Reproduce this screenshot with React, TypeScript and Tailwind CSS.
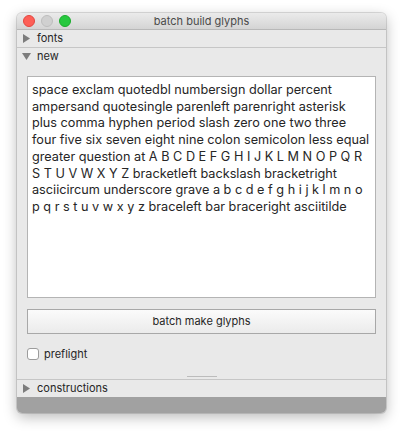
const lines = [
  "space exclam quotedbl numbersign dollar percent",
  "ampersand quotesingle parenleft parenright asterisk",
  "plus comma hyphen period slash zero one two three",
  "four five six seven eight nine colon semicolon less equal",
  "greater question at A B C D E F G H I J K L M N O P Q R",
  "S T U V W X Y Z bracketleft backslash bracketright",
  "asciicircum underscore grave a b c d e f g h i j k l m n o",
  "p q r s t u v w x y z braceleft bar braceright asciitilde",
]

function Disclosure({ open }: { open?: boolean }) {
  return open ? (
    <svg width="9" height="7" viewBox="0 0 9 7" className="shrink-0">
      <path d="M0 0 L9 0 L4.5 7 Z" fill="#7d7d7d" />
    </svg>
  ) : (
    <svg width="7" height="9" viewBox="0 0 7 9" className="shrink-0">
      <path d="M0 0 L7 4.5 L0 9 Z" fill="#7d7d7d" />
    </svg>
  )
}

function SectionHeader({ label, open }: { label: string; open?: boolean }) {
  return (
    <div className="h-[17px] flex items-center pl-[5px] gap-[6px] text-[11px] text-[#262626]">
      <div className="w-[9px] flex justify-center">
        <Disclosure open={open} />
      </div>
      <span className="leading-none">{label}</span>
    </div>
  )
}

export default function App() {
  return (
    <div
      className="w-[403px] h-[434px] bg-white pt-[13px] pl-[17px]"
      style={{ fontFamily: "Inter, 'Noto Sans', sans-serif" }}
    >
      <div className="w-[369px] h-[400px] rounded-[5px] overflow-hidden flex flex-col bg-[#e9e9e9] shadow-[0_4px_14px_rgba(0,0,0,0.28),0_0_0_1px_rgba(0,0,0,0.12)]">
        {/* Title bar */}
        <div className="relative h-[16px] shrink-0 flex items-center bg-gradient-to-b from-[#ebebeb] to-[#d4d4d4] border-b border-[#b8b8b8] box-content">
          <div className="flex items-center gap-[6px] pl-[6px]">
            <span className="w-[12px] h-[12px] rounded-full bg-[#fd5f57] border border-[#e2463f]" />
            <span className="w-[12px] h-[12px] rounded-full bg-[#d0d0d0] border border-[#bdbdbd]" />
            <span className="w-[12px] h-[12px] rounded-full bg-[#27c83f] border border-[#1aac2c]" />
          </div>
          <div className="absolute inset-0 flex items-center justify-center text-[11px] text-[#4a4a4a] leading-none">
            batch build glyphs
          </div>
        </div>

        <div className="border-b border-[#c6c6c6]">
          <SectionHeader label="fonts" />
        </div>

        <SectionHeader label="new" open />

        <div className="flex-1 flex flex-col px-[10px] pt-[11px]">
          <div className="h-[222px] bg-white border border-[#b4b4b4] pl-[4px] pt-[5px] text-[12.7px] leading-[16.7px] text-[#262626]">
            {lines.map((l) => (
              <div key={l} className="whitespace-nowrap">
                {l}
              </div>
            ))}
          </div>

          <button className="mt-[11px] h-[25px] w-full border border-[#a8a8a8] bg-gradient-to-b from-[#fbfbfb] to-[#ebebeb] text-[11px] text-[#262626] leading-none">
            batch make glyphs
          </button>

          <label className="mt-[14px] flex items-center gap-[5px] text-[11px] text-[#262626] leading-none">
            <span className="w-[12px] h-[12px] rounded-[3px] bg-white border border-[#9c9c9c]" />
            preflight
          </label>

          <div className="mt-auto mb-[2px] flex justify-center">
            <div className="w-[30px] h-px bg-[#bcbcbc]" />
          </div>
        </div>

        <div className="border-t border-[#c6c6c6]">
          <SectionHeader label="constructions" />
        </div>

        <div className="h-[16px] shrink-0 bg-[#a1a1a1]" />
      </div>
    </div>
  )
}
